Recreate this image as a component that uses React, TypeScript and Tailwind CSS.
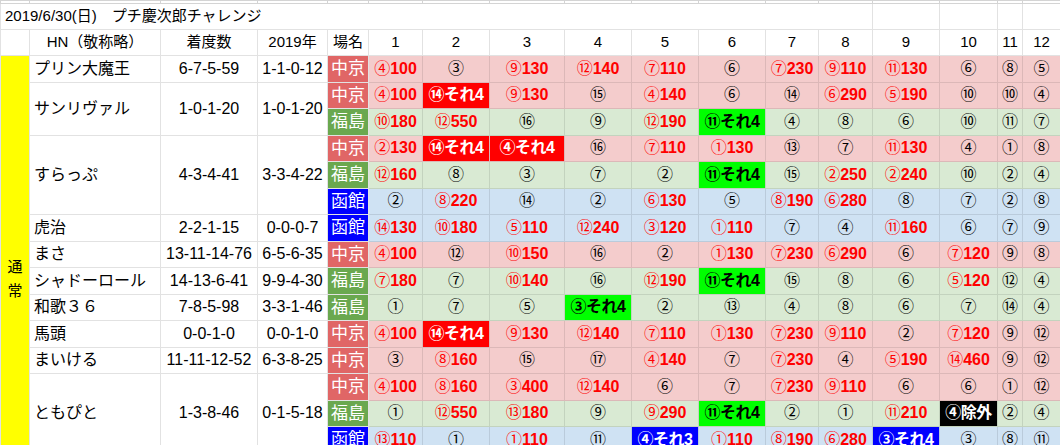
const COLS = [29, 131, 97, 70, 41, 54, 67, 75, 67, 67, 67, 53, 54, 67, 58, 25, 38];

type Row = { name?: string; span?: number; a?: string; b?: string; venue: string; cells: string[] };

const rows: Row[] = [
  { name: "プリン大魔王", span: 1, a: "6-7-5-59", b: "1-1-0-12", venue: "中京", cells: ["④100", "③", "⑨130", "⑫140", "⑦110", "⑥", "⑦230", "⑨110", "⑪130", "⑥", "⑧", "⑤"] },
  { name: "サンリヴァル", span: 2, a: "1-0-1-20", b: "1-0-1-20", venue: "中京", cells: ["④100", "R:⑭それ4", "⑨130", "⑮", "④140", "⑥", "⑭", "⑥290", "⑤190", "⑩", "⑩", "④"] },
  { venue: "福島", cells: ["⑩180", "⑫550", "⑯", "⑨", "⑫190", "G:⑪それ4", "④", "⑧", "⑥", "⑩", "⑪", "⑦"] },
  { name: "すらっぷ", span: 3, a: "4-3-4-41", b: "3-3-4-22", venue: "中京", cells: ["②130", "R:⑭それ4", "R:④それ4", "⑯", "⑦110", "①130", "⑬", "⑦", "⑪130", "④", "①", "⑧"] },
  { venue: "福島", cells: ["⑫160", "⑧", "③", "⑦", "②", "G:⑪それ4", "⑮", "②250", "②240", "⑩", "②", "④"] },
  { venue: "函館", cells: ["②", "⑧220", "⑭", "②", "⑥130", "⑤", "⑧190", "⑥280", "⑧", "⑦", "②", "⑧"] },
  { name: "虎治", span: 1, a: "2-2-1-15", b: "0-0-0-7", venue: "函館", cells: ["⑭130", "⑩180", "⑤110", "⑫240", "③120", "①110", "⑦", "④", "⑪160", "⑥", "⑦", "⑨"] },
  { name: "まさ", span: 1, a: "13-11-14-76", b: "6-5-6-35", venue: "中京", cells: ["④100", "⑫", "⑩150", "⑯", "②", "①130", "⑦230", "⑥290", "⑥", "⑦120", "⑨", "⑧"] },
  { name: "シャドーロール", span: 1, a: "14-13-6-41", b: "9-9-4-30", venue: "福島", cells: ["⑦180", "⑦", "⑩140", "⑯", "⑫190", "G:⑪それ4", "⑮", "⑧", "⑥", "⑤120", "⑫", "④"] },
  { name: "和歌３６", span: 1, a: "7-8-5-98", b: "3-3-1-46", venue: "福島", cells: ["①", "⑦", "⑤", "G:③それ4", "②", "⑬", "④", "⑧", "⑥", "⑦", "⑭", "④"] },
  { name: "馬頭", span: 1, a: "0-0-1-0", b: "0-0-1-0", venue: "中京", cells: ["④100", "R:⑭それ4", "⑨130", "⑫140", "⑦110", "①130", "⑦230", "⑨110", "②", "⑦120", "⑨", "⑫"] },
  { name: "まいける", span: 1, a: "11-11-12-52", b: "6-3-8-25", venue: "中京", cells: ["③", "⑧160", "⑮", "⑰", "④140", "⑦", "⑦230", "④", "⑤190", "⑭460", "⑨", "⑫"] },
  { name: "ともぴと", span: 3, a: "1-3-8-46", b: "0-1-5-18", venue: "中京", cells: ["④100", "⑧160", "③400", "⑫140", "⑥", "⑦", "⑦230", "⑨110", "⑥", "⑥", "①", "⑫"] },
  { venue: "福島", cells: ["①", "⑫550", "⑬180", "⑨", "⑨290", "G:⑪それ4", "②", "①", "⑪210", "K:④除外", "②", "④"] },
  { venue: "函館", cells: ["⑬110", "①", "①110", "⑪", "B:④それ3", "①110", "⑧190", "⑥280", "B:③それ4", "③", "⑧", "⑪"] },
];

const venueCls: Record<string, string> = {
  中京: "bg-[#e06666]",
  福島: "bg-[#6aa84f]",
  函館: "bg-[#0000ff]",
};
const rowBg: Record<string, string> = {
  中京: "bg-[#f4cccc]",
  福島: "bg-[#d9ead3]",
  函館: "bg-[#cfe2f3]",
};
const rowBorder: Record<string, string> = {
  中京: "border-[#dcb8b8]",
  福島: "border-[#c3d3be]",
  函館: "border-[#bacbdb]",
};
const hl: Record<string, string> = {
  "R:": "bg-[#ff0000] text-white",
  "G:": "bg-[#00ff00] text-black",
  "B:": "bg-[#0000ff] text-white",
  "K:": "bg-black text-white",
};

function Cell({ v, venue }: { v: string; venue: string }) {
  const base = `border h-[26px] p-0 text-center text-[16px] leading-none whitespace-nowrap ${rowBorder[venue]}`;
  const pre = v.slice(0, 2);
  if (hl[pre]) {
    return <td className={`${base} ${hl[pre]} font-bold tracking-[-0.5px]`}>{v.slice(2)}</td>;
  }
  if (v.length > 1) {
    return (
      <td className={`${base} ${rowBg[venue]} text-[#ff0000]`}>
        <span className="font-normal">{v[0]}</span>
        <span className="font-bold">{v.slice(1)}</span>
      </td>
    );
  }
  return <td className={`${base} ${rowBg[venue]} text-black`}>{v}</td>;
}

export default function App() {
  return (
    <div
      className="w-[1060px] h-[445px] overflow-hidden bg-white text-black"
      style={{ fontFamily: '"Liberation Sans", "Noto Sans CJK JP", sans-serif' }}
    >
      <table className="border-collapse table-fixed w-[1060px]">
        <colgroup>
          {COLS.map((w, i) => (
            <col key={i} style={{ width: w }} />
          ))}
        </colgroup>
        <tbody>
          <tr className="h-[3px]">
            {COLS.map((_, i) => (
              <td key={i} className="border border-[#d4d4d4] p-0 h-[3px]" />
            ))}
          </tr>
          <tr>
            <td colSpan={13} className="border border-[#e2e2e2] h-[26px] px-1 text-[15px] whitespace-nowrap">
              2019/6/30(日)　プチ慶次郎チャレンジ
            </td>
            {[0, 1, 2, 3].map((i) => (
              <td key={i} className="border border-[#e2e2e2]" />
            ))}
          </tr>
          <tr className="text-[15px] text-center">
            <td className="border border-[#e2e2e2] h-[26px]" />
            <td className="border border-[#e2e2e2]">HN（敬称略）</td>
            <td className="border border-[#e2e2e2]">着度数</td>
            <td className="border border-[#e2e2e2]">2019年</td>
            <td className="border border-[#e2e2e2]">場名</td>
            {Array.from({ length: 12 }, (_, i) => (
              <td key={i} className="border border-[#e2e2e2]">
                {i + 1}
              </td>
            ))}
          </tr>
          {rows.map((r, i) => (
            <tr key={i}>
              {i === 0 && (
                <td rowSpan={15} className="bg-[#ffff00] border border-[#e2e2e2] text-center text-[15px] leading-[24px] pt-[50px]">
                  通<br />常
                </td>
              )}
              {r.name && (
                <>
                  <td rowSpan={r.span} className="border border-[#e2e2e2] px-1 text-[16px] whitespace-nowrap">
                    {r.name}
                  </td>
                  <td rowSpan={r.span} className="border border-[#e2e2e2] text-center text-[16px]">
                    {r.a}
                  </td>
                  <td rowSpan={r.span} className="border border-[#e2e2e2] text-center text-[16px]">
                    {r.b}
                  </td>
                </>
              )}
              <td className={`border border-[#e2e2e2] h-[26px] text-center text-white text-[17px] ${venueCls[r.venue]}`}>
                {r.venue}
              </td>
              {r.cells.map((c, j) => (
                <Cell key={j} v={c} venue={r.venue} />
              ))}
            </tr>
          ))}
        </tbody>
      </table>
    </div>
  );
}
